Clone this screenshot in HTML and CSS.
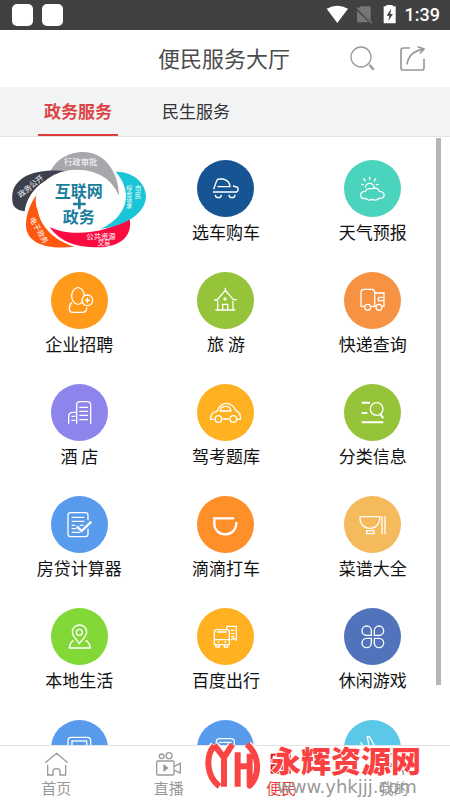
FILE: index.html
```html
<!DOCTYPE html>
<html lang="zh-CN">
<head>
<meta charset="utf-8">
<meta name="viewport" content="width=device-width, initial-scale=1">
<title>便民服务大厅</title>
<link rel="stylesheet" href="styles.css">
</head>
<body>
<div class="status">
  <span class="chip"></span><span class="chip"></span>
  <svg class="status-icons" width="70" height="20" viewBox="0 0 210 60">
    <path d="M2 11 Q34-7 66 11 L34 54Z" fill="#fff"/>
    <path d="M104 4 H134 V52 H93 V15Z" fill="#777"/>
    <path d="M89 8 L137 55" stroke="#414141" stroke-width="8"/><path d="M92 7 L138 55" stroke="#777" stroke-width="4"/>
    <path d="M173 4 H181 V0 H200 V4 H209 V55 H173Z" fill="#fff"/>
    <path d="M195 11 L182 32 H190 L187 48 L201 27 H193Z" fill="#414141"/>
  </svg>
  <span class="time">1:39</span>
</div>
<header class="header">
  <h1 class="title">便民服务大厅</h1>
  <button class="tool" type="button" aria-label="搜索">
    <svg width="25" height="25" viewBox="0 0 75 75" fill="none" stroke="#999"><circle cx="33" cy="33" r="30" stroke-width="4"/><path d="M58 56 L71 71" stroke-width="7"/></svg>
  </button>
  <button class="tool" type="button" aria-label="分享">
    <svg width="25" height="25" viewBox="0 0 75 75" fill="none" stroke="#999" stroke-width="5"><path d="M30 6 H10 Q3 6 3 13 V65 Q3 72 10 72 H65 Q72 72 72 65 V39 M21 55 C25 30 42 13 71 10 M53 2 L72 9 L60 22"/></svg>
  </button>
</header>
<nav class="tabs">
  <a class="tab tab-on" href="#gov">政务服务</a>
  <a class="tab" href="#life">民生服务</a>
</nav>
<main class="content">
  <div class="grid">
    <a class="banner" href="#gov">
      <svg width="134" height="96" viewBox="36 36 402 288">
        <path fill="#a8a7ac" d="M147 109 C156 66 200 36 250 36 C314 36 356 96 357 167 C324 97 240 72 147 109Z"/>
        <path fill="#3d404c" d="M37 182 C30 108 112 82 207 95 C126 112 82 157 74 214 C52 210 38 202 37 182Z"/>
        <path fill="#fd5710" d="M119 153 C94 180 77 223 78 258 C80 310 142 330 223 320 C145 296 92 230 119 153Z"/>
        <path fill="#fb0b40" d="M149 261 C210 292 320 282 388 231 C402 294 354 322 292 322 C232 322 181 307 149 261Z"/>
        <path fill="#19c5d6" d="M347 95 C402 94 439 132 438 171 C434 225 371 258 302 267 C385 228 400 155 347 95Z"/>
        <ellipse cx="231" cy="182" rx="124" ry="93" fill="#fff"/>
        <g class="art-small" text-anchor="middle">
          <text x="242" y="75" font-size="25">行政审批</text>
          <text transform="translate(97 145) rotate(-39)" font-size="23">政务公开</text>
          <text transform="translate(110 275) rotate(60)" font-size="22">电子政务</text>
          <text x="303" y="297" font-size="22">公共资源</text>
          <text x="312" y="315" font-size="19">交易</text>
          <text x="414" y="153" font-size="20">市</text><text x="414" y="173" font-size="20">民</text>
          <text x="388" y="151" font-size="18">综</text><text x="388" y="169" font-size="18">合</text><text x="388" y="187" font-size="18">诉</text><text x="388" y="205" font-size="18">求</text>
        </g>
        <g class="art-big" text-anchor="middle">
          <text x="236" y="171" font-size="48">互联网</text>
          <text x="236" y="248" font-size="48">政务</text>
        </g>
        <path d="M219 192 H257 M238 176 V208" stroke="#197d9b" stroke-width="8"/>
      </svg>
    </a>
    <a class="item" href="#buy-car"><span class="disc navy"><svg viewBox="0 0 171 171"><path d="M50 88 L59 62 Q61 57 67 57 H78 Q98 62 99 80 H61 M48 96 H119 Q126 91 122 82 L108 78 M55 104 a9 9 0 0 0 18 0 M96 104 a9 9 0 0 0 18 0"/></svg></span>选车购车</a>
    <a class="item" href="#weather"><span class="disc teal"><svg viewBox="0 0 171 171"><path d="M64 83 a13 13 0 0 1 26 0 M77 50 V59 M59 55 L64 64 M95 55 L90 64 M51 73 L60 74 M95 74 L105 73 M66 115 C45 122 44 93 64 94 C68 84 79 85 84 87 C94 80 104 87 106 94 C126 94 125 119 104 115 C98 122 89 121 85 118 C79 121 70 121 66 115Z"/></svg></span>天气预报</a>

    <a class="item" href="#jobs"><span class="disc orange"><svg viewBox="0 0 171 171"><ellipse cx="81" cy="72" rx="19" ry="25"/><path d="M63 92 Q55 97 55 110 Q55 121 66 121 H96 Q107 121 107 106"/><circle class="badge" cx="109" cy="85" r="16"/><path d="M101 85 H117 M109 77 V93"/></svg></span>企业招聘</a>
    <a class="item" href="#travel"><span class="disc green"><svg viewBox="0 0 171 171"><path d="M51 84 H60 L85 55 L109 83 H120 M85 47 V56 M62 86 V113 M108 86 V113 M55 114 H115 M77 113 V97 H92 V113"/><circle cx="84" cy="81" r="3"/></svg></span>旅 游</a>
    <a class="item" href="#express"><span class="disc coral"><svg viewBox="0 0 171 171"><path d="M61 103 H51 V60 Q51 52 60 52 H83 Q92 52 92 60 V103 H81 M92 63 H120 V103 H116 M96 103 H92 M120 76 H106 Q103 76 103 80 V86 H120"/><circle cx="71" cy="106" r="9"/><circle cx="105" cy="106" r="9"/></svg></span>快递查询</a>

    <a class="item" href="#hotel"><span class="disc violet"><svg viewBox="0 0 171 171"><path d="M77 119 V63 Q77 53 87 53 H108 Q119 53 119 63 V119 M85 70 H111 M85 82 H111 M85 94 H111 M85 107 H111 M53 119 V97 Q54 85 65 85 H76 M61 97 H73 M61 109 H73"/></svg></span>酒 店</a>
    <a class="item" href="#driving"><span class="disc amber"><svg viewBox="0 0 171 171"><path d="M53 106 H41 Q39 85 60 82 Q70 58 88 58 Q107 58 117 80 Q132 87 130 106 H120 M77 105 H97 M69 81 Q71 67 86 67 Q100 67 102 81Z"/><circle cx="64" cy="105" r="10"/><circle cx="109" cy="105" r="10"/></svg></span>驾考题库</a>
    <a class="item" href="#listings"><span class="disc green"><svg viewBox="0 0 171 171"><path class="bold" d="M53 56 H78 M53 87 H70 M53 115 H118 M109 91 L118 102"/><circle cx="98" cy="75" r="19"/></svg></span>分类信息</a>

    <a class="item" href="#mortgage"><span class="disc blue"><svg viewBox="0 0 171 171"><path d="M111 73 V58 Q111 50 103 50 H59 Q51 50 51 58 V114 Q51 122 59 122 H103 Q111 122 111 114 V98 M62 64 H100 M62 76 H100 M62 88 H73 M86 88 H98 M62 98 H76 M62 109 H88"/><path class="heavy" d="M77 91 L92 105 L121 77"/></svg></span>房贷计算器</a>
    <a class="item" href="#taxi"><span class="disc tangerine"><svg viewBox="0 0 171 171"><path class="heavy" d="M111 67 H52 V82 C52 103 66 115 85 115 C104 115 118 102 118 78"/></svg></span>滴滴打车</a>
    <a class="item" href="#recipes"><span class="disc sand"><svg viewBox="0 0 171 171"><path d="M48 62 H107 C109 82 96 97 78 97 C60 97 46 82 48 62 M68 104 H90 V113 H68Z M114 61 V115 M123 61 V115"/></svg></span>菜谱大全</a>

    <a class="item" href="#local"><span class="disc lime"><svg viewBox="0 0 171 171"><path d="M85 107 C77 95 64 84 64 72 C64 44 107 44 107 72 C107 84 93 95 85 107Z M68 99 H64 Q56 107 55 120 H118 Q117 107 108 99 H103"/><circle cx="85" cy="73" r="9"/></svg></span>本地生活</a>
    <a class="item" href="#transit"><span class="disc amber"><svg viewBox="0 0 171 171"><path d="M60 65 H90 Q97 65 97 73 V110 H52 V73 Q52 65 60 65Z M52 95 H97 M60 72 H89 M57 111 V117 H67 V111 M82 111 V117 H92 V111 M62 102 H67 M82 102 H87 M89 64 V55 H118 V96 L110 91 L101 96 M102 67 H112 M102 77 H112 M102 86 H112"/></svg></span>百度出行</a>
    <a class="item" href="#games"><span class="disc indigo"><svg viewBox="0 0 171 171"><path d="M82 82 V68 A14 14 0 1 0 68 82Z M91 82 H105 A14 14 0 1 0 91 68Z M91 91 V105 A14 14 0 1 0 105 91Z M82 91 H68 A14 14 0 1 0 82 105Z"/></svg></span>休闲游戏</a>

    <a class="item" href="#more-1"><span class="disc blue"><svg viewBox="0 0 171 171"><rect x="51" y="52" width="68" height="65" rx="10"/><rect x="63" y="63" width="44" height="30"/></svg></span></a>
    <a class="item" href="#more-2"><span class="disc blue"><svg viewBox="0 0 171 171"><rect x="58" y="56" width="54" height="60" rx="10"/><path d="M66 67 H104 M50 72 V90"/></svg></span></a>
    <a class="item" href="#more-3"><span class="disc sky"><svg viewBox="0 0 171 171"><path d="M92 78 L76 50 H70 L76 84 M50 66 L58 82 H100"/></svg></span></a>
  </div>
  <div class="scrollbar"></div>
</main>
<nav class="bottom">
  <a class="link" href="#home"><svg width="25" height="25" viewBox="0 0 75 75"><path d="M4 32 L38 4 L71 32 M11 38 V69 H27 V58 Q27 50 38 50 Q48 50 48 58 V69 H65 V38"/></svg>首页</a>
  <a class="link" href="#live"><svg width="25" height="25" viewBox="0 0 75 75"><circle cx="17" cy="13" r="7"/><circle cx="39" cy="11" r="9"/><rect x="2" y="27" width="52" height="42" rx="4"/><path d="M55 43 L73 34 V63 L55 55"/><path d="M24 40 L35 48 L24 56Z" fill="#999"/></svg>直播</a>
  <a class="link link-on" href="#services"><svg width="25" height="25" viewBox="0 0 75 75"><rect x="8" y="8" width="22" height="22"/><rect x="40" y="8" width="22" height="22"/><rect x="8" y="40" width="22" height="22"/><rect x="40" y="40" width="22" height="22"/></svg>便民</a>
  <a class="link" href="#me"><svg width="25" height="25" viewBox="0 0 75 75"><circle cx="38" cy="21" r="17"/><path d="M8 69 Q10 42 38 42 Q66 42 68 69"/></svg>我的</a>
</nav>
<div class="mark">
  <svg width="56" height="50" viewBox="0 0 168 150" fill="none">
    <path stroke="#fff" stroke-width="27" stroke-linejoin="round" d="M28 14 C2 42 2 104 43 136 M28 12 L57 50 M57 137 V50 L82 12 M98 137 V34 M98 76 H134 M128 12 C165 45 165 105 134 134 V38"/>
    <path stroke="#fa4545" stroke-width="18" stroke-linejoin="round" d="M28 14 C2 42 2 104 43 136 M28 12 L57 50 M57 137 V50 L82 10 M98 137 V34 M98 76 H134 M126 10 C165 45 165 105 134 134 V38"/>
  </svg>
  <div class="mark-words"><strong class="mark-name">永辉资源网</strong><span class="mark-url">www.yhkjjj.com</span></div>
</div>
</body>
</html>
```
FILE: styles.css
```css
* { box-sizing: border-box; }
body {
  margin: 0;
  height: 100vh;
  display: flex;
  flex-direction: column;
  overflow: hidden;
  position: relative;
  background: #fff;
  color: #111;
  font-family: "Noto Sans CJK SC", sans-serif;
}
a { color: inherit; text-decoration: none; }
svg { display: block; }

.status {
  flex: none;
  height: 30px;
  padding: 0 10px 0 12px;
  display: flex;
  align-items: center;
  gap: 9px;
  background: #414141;
}
.chip { width: 21px; height: 22px; border-radius: 5px; background: #fff; }
.status-icons { margin-left: auto; }
.time { color: #fff; font: 500 18px/32px Roboto, sans-serif; }

.header {
  flex: none;
  height: 57px;
  padding: 0 25px;
  display: grid;
  grid-template-columns: 108px 1fr auto auto;
  align-items: center;
  column-gap: 25px;
}
.title {
  grid-column: 2;
  margin: 0;
  padding-bottom: 4px;
  color: #4c4c4c;
  font-size: 22px;
  line-height: 32px;
  font-weight: 400;
}
.tool { border: 0; padding: 0; background: none; }

.tabs {
  flex: none;
  height: 50px;
  padding: 0 38px;
  display: flex;
  gap: 38px;
  background: #f2f3f5;
  border-bottom: 1px solid #e4e4e4;
}
.tab {
  width: 80px;
  text-align: center;
  font-size: 17px;
  line-height: 47px;
  color: #333;
}
.tab-on { color: #dc4545; font-weight: 700; border-bottom: 2px solid #e03c3c; }

.content { flex: 1; min-height: 0; overflow: hidden; position: relative; }
.grid {
  padding: 15px 4px 0 6px;
  display: grid;
  grid-template-columns: repeat(3, 1fr);
  grid-auto-rows: 112px;
}
.banner { display: flex; justify-content: center; align-items: flex-start; }
.art-small { fill: #fff; font-weight: 400; }
.art-big { fill: #197d9b; font-weight: 700; }
.item {
  padding-top: 8px;
  display: flex;
  flex-direction: column;
  align-items: center;
  gap: 3px;
  font-size: 17px;
  line-height: 24px;
  white-space: pre;
}
.disc { width: 57px; height: 57px; border-radius: 50%; background: var(--tone); }
.disc svg { fill: none; stroke: #fff; stroke-width: 4; }
.disc .bold { stroke-width: 6; }
.disc .heavy { stroke-width: 7; }
.disc .badge { fill: var(--tone); }
.navy { --tone: #175494; }
.teal { --tone: #4bd4bd; }
.orange { --tone: #ff9a1a; }
.green { --tone: #95c33a; }
.coral { --tone: #f79242; }
.violet { --tone: #8d85ec; }
.amber { --tone: #ffb121; }
.blue { --tone: #589aeb; }
.tangerine { --tone: #ff8f29; }
.sand { --tone: #f5ba5b; }
.lime { --tone: #82d837; }
.indigo { --tone: #5173bb; }
.sky { --tone: #5bc8e9; }
.scrollbar {
  position: absolute;
  top: 1px;
  right: 9px;
  width: 5px;
  height: 90%;
  background: #b5b5b5;
}

.bottom {
  flex: none;
  height: 55px;
  padding-top: 6px;
  display: grid;
  grid-template-columns: repeat(4, 1fr);
  border-top: 1px solid #e4e4e4;
  background: #fff;
}
.link {
  display: flex;
  flex-direction: column;
  align-items: center;
  font-size: 15px;
  line-height: 22px;
  color: #999;
}
.link svg { fill: none; stroke: #999; stroke-width: 4; }
.link-on { color: #e53c3c; }
.link-on svg { stroke: #e01515; stroke-width: 6; }

.mark {
  position: absolute;
  left: 205px;
  bottom: 0;
  display: flex;
  align-items: flex-start;
  gap: 10px;
  height: 59px;
  pointer-events: none;
}
.mark-words { display: flex; flex-direction: column; }
.mark-name {
  font-size: 30px;
  line-height: 36px;
  font-weight: 900;
  color: #fa4040;
  text-shadow: 1px 0 #fff, -1px 0 #fff, 0 1px #fff, 0 -1px #fff;
}
.mark-url {
  padding-left: 6px;
  color: #999;
  font: 18px/20px "DejaVu Sans", sans-serif;
}
```
